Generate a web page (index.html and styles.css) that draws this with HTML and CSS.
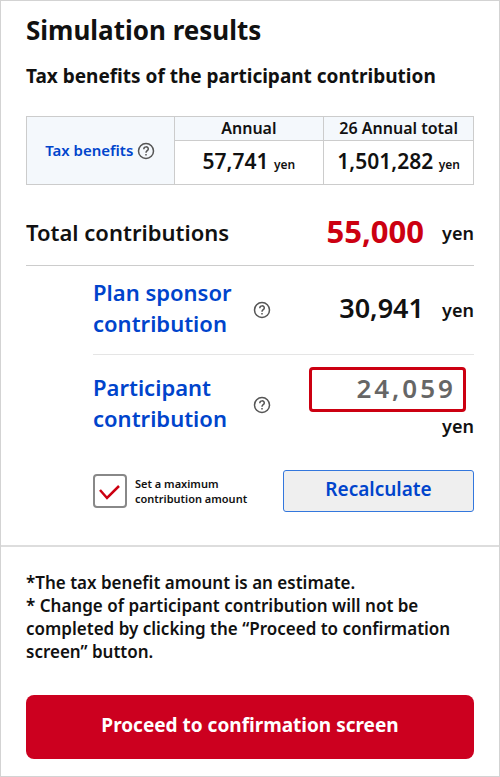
FILE: index.html
```html
<!DOCTYPE html>
<html lang="en">
<head>
    <meta charset="UTF-8">
    <meta name="viewport" content="width=device-width, initial-scale=1.0">
    <title>Simulation results</title>
    <link rel="stylesheet" href="styles.css">
</head>
<body>
    <main class="panel">
        <section class="results">
            <h1 class="title">Simulation results</h1>
            <h2 class="subtitle">Tax benefits of the participant contribution</h2>

            <table class="benefits">
                <tr>
                    <th class="benefits-label" rowspan="2" scope="row">
                        <span class="label-wrap">
                            <a href="#">Tax benefits</a>
                            <button class="help" type="button" aria-label="About tax benefits">
                                <svg viewBox="0 0 18 18"><circle cx="9" cy="9" r="7.5"/><path d="M6.8 7.2C6.8 4.1 11.3 4.2 11.3 6.9C11.3 8.7 9 8.7 9 10.7M9 12V13.6"/></svg>
                            </button>
                        </span>
                    </th>
                    <th class="benefits-head" scope="col">Annual</th>
                    <th class="benefits-head" scope="col">26 Annual total</th>
                </tr>
                <tr>
                    <td>57,741 <small>yen</small></td>
                    <td>1,501,282 <small>yen</small></td>
                </tr>
            </table>

            <div class="total">
                <span class="total-label">Total contributions</span>
                <span class="total-amount">55,000</span>
                <span class="unit">yen</span>
            </div>

            <div class="breakdown">
                <div class="row">
                    <a class="row-label" href="#">Plan sponsor contribution</a>
                    <button class="help" type="button" aria-label="About plan sponsor contribution">
                        <svg viewBox="0 0 18 18"><circle cx="9" cy="9" r="7.5"/><path d="M6.8 7.2C6.8 4.1 11.3 4.2 11.3 6.9C11.3 8.7 9 8.7 9 10.7M9 12V13.6"/></svg>
                    </button>
                    <span class="row-amount">30,941</span>
                    <span class="unit">yen</span>
                </div>
                <div class="row row-input">
                    <a class="row-label" href="#">Participant contribution</a>
                    <button class="help" type="button" aria-label="About participant contribution">
                        <svg viewBox="0 0 18 18"><circle cx="9" cy="9" r="7.5"/><path d="M6.8 7.2C6.8 4.1 11.3 4.2 11.3 6.9C11.3 8.7 9 8.7 9 10.7M9 12V13.6"/></svg>
                    </button>
                    <div class="field">
                        <input class="amount-input" id="amount" type="text" value="24,059" aria-label="Participant contribution">
                        <label class="unit" for="amount">yen</label>
                    </div>
                </div>
                <div class="actions">
                    <input class="check" id="maximum" type="checkbox" checked>
                    <label class="check-label" for="maximum">Set a maximum contribution amount</label>
                    <button class="recalculate" type="button">Recalculate</button>
                </div>
            </div>
        </section>

        <section class="confirm">
            <p>*The tax benefit amount is an estimate.</p>
            <p>* Change of participant contribution will not be completed by clicking the “Proceed to confirmation screen” button.</p>
            <button class="proceed" type="button">Proceed to confirmation screen</button>
        </section>
    </main>
</body>
</html>
```
FILE: styles.css
```css
* {
    margin: 0;
    padding: 0;
    box-sizing: border-box;
}

body {
    font-family: "Noto Sans", sans-serif;
    font-weight: 600;
    color: #111;
    background: #fff;
}

button,
input {
    font: inherit;
}

button {
    cursor: pointer;
}

a {
    color: #0044cc;
    text-decoration: none;
}

.panel {
    min-height: 100vh;
    border: 1px solid #d3d3d3;
}

.results {
    padding: 11px 25px 33px;
    border-bottom: 2px solid #ddd;
}

.title {
    font-size: 26px;
    font-weight: 700;
    line-height: 36px;
}

.subtitle {
    margin-top: 13px;
    font-size: 19px;
    font-weight: 700;
    line-height: 30px;
}

.benefits {
    width: 100%;
    margin-top: 25px;
    table-layout: fixed;
    border-collapse: collapse;
}

.benefits th,
.benefits td {
    border: 1px solid #ccc;
    text-align: center;
    font-weight: 600;
}

.benefits th {
    background: #f4f8fc;
    font-size: 16px;
    line-height: 23px;
}

.benefits td {
    height: 44px;
    font-size: 21px;
    line-height: 28px;
}

.benefits small {
    font-size: 12px;
}

.benefits .benefits-label {
    width: 33%;
    font-size: 15px;
}

.label-wrap {
    display: flex;
    justify-content: center;
    align-items: center;
    gap: 4px;
}

.help {
    flex: none;
    width: 18px;
    height: 18px;
    border: none;
    background: none;
}

.help svg {
    display: block;
    fill: none;
    stroke: #555;
    stroke-width: 1.5;
}

.total {
    display: flex;
    align-items: center;
    padding: 26px 0 13px;
    border-bottom: 1px solid #ccc;
}

.total-label {
    flex: 1;
    font-size: 22px;
}

.total-amount {
    color: #cc0011;
    font-size: 31px;
    font-weight: 700;
    line-height: 41px;
}

.unit {
    width: 50px;
    font-size: 18px;
    line-height: 25px;
    text-align: right;
}

.total .unit,
.row > .unit {
    padding-top: 4px;
}

.breakdown {
    padding-left: 67px;
}

.row {
    display: flex;
    align-items: center;
    padding: 11px 0 15px;
}

.row > .help {
    margin-top: 4px;
}

.row-input {
    border-top: 1px solid #e5e5e5;
    padding: 12px 0 14px;
}

.row-label {
    width: 160px;
    font-size: 22px;
    line-height: 31px;
}

.row-amount {
    flex: 1;
    font-size: 27px;
    line-height: 36px;
    text-align: right;
}

.field {
    flex: 1;
    display: flex;
    flex-direction: column;
    align-items: flex-end;
    gap: 2px;
}

.amount-input {
    width: 157px;
    height: 45px;
    margin-right: 8px;
    padding: 0 7px 4px;
    border: 3px solid #cc0011;
    border-radius: 4px;
    color: #666;
    font-size: 26px;
    letter-spacing: 3px;
    text-align: right;
}

.actions {
    display: flex;
    align-items: center;
    margin-top: 17px;
}

.check {
    appearance: none;
    flex: none;
    width: 34px;
    height: 34px;
    border: 2px solid #888;
    border-radius: 4px;
}

.check:checked {
    background: url("data:image/svg+xml,%3Csvg xmlns='http://www.w3.org/2000/svg' viewBox='0 0 30 30'%3E%3Cpath d='M5 14L12 22L24 10' fill='none' stroke='%23cc0011' stroke-width='2.5'/%3E%3C/svg%3E") center / 30px 30px no-repeat;
}

.check-label {
    flex: 1;
    padding-left: 8px;
    font-size: 11px;
    line-height: 15px;
}

.recalculate {
    width: 191px;
    height: 42px;
    padding-bottom: 4px;
    border: 1px solid #3377dd;
    border-radius: 3px;
    background: #efefef;
    color: #0044cc;
    font-size: 19px;
}

.confirm {
    padding: 24px 25px 17px;
}

.confirm p {
    font-size: 17px;
    line-height: 23px;
}

.proceed {
    width: 100%;
    height: 64px;
    margin-top: 32px;
    padding-bottom: 4px;
    border: none;
    border-radius: 8px;
    background: #cc001f;
    color: #fff;
    font-size: 19px;
    font-weight: 700;
}
```
